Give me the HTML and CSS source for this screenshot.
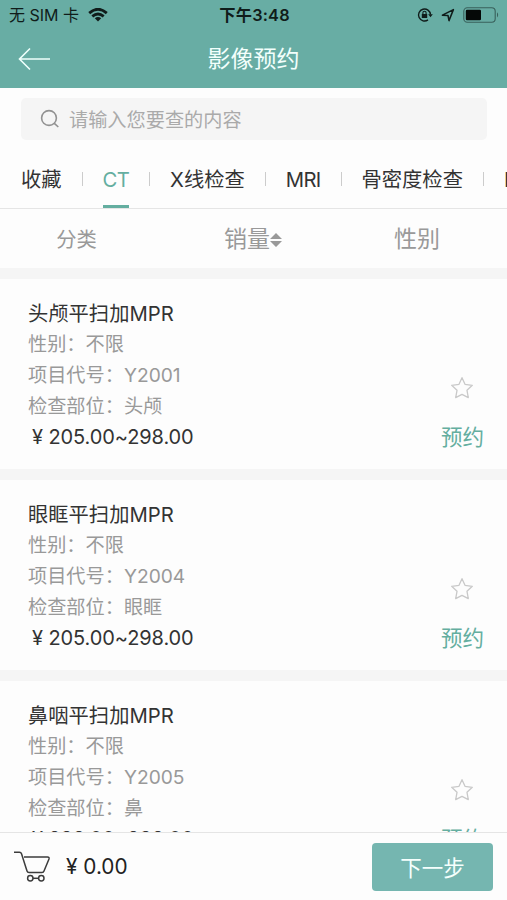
FILE: index.html
```html
<!DOCTYPE html>
<html lang="zh-CN">
<head>
<meta charset="utf-8">
<title>影像预约</title>
<link rel="stylesheet" href="styles.css">
</head>
<body>
<div class="app">
  <header class="header">
    <div class="status">
      <div class="carrier"><span>无 SIM 卡</span>
        <svg width="20" height="14" viewBox="0 0 20 14" fill="none" stroke="#101c1a" stroke-width="2.8"><path d="M1.2 5.1Q10-2.6 18.800 5.1M4.300 8.3Q10 3.600 15.700 8.3"/><path d="M6.800 10.300Q10 7.900 13.200 10.300L10 13.500Z" fill="#101c1a" stroke="none"/></svg>
      </div>
      <div class="clock">下午3:48</div>
      <div class="indicators">
        <svg width="16" height="16" viewBox="0 0 16 16" fill="none" stroke="#101c1a" stroke-width="1.4"><path d="M11 12.9A6 6 0 1 1 13.500 7.500"/><path d="M11.200 7.200h4.600l-2.300 3z" fill="#101c1a" stroke="none"/><rect x="4.800" y="7" width="5.400" height="4" fill="#101c1a" stroke="none"/><path d="M5.900 7V5.800a1.600 1.600 0 0 1 3.200 0V7" stroke-width="1.1"/></svg>
        <svg width="14" height="14" viewBox="0 0 14 14" fill="none" stroke="#101c1a" stroke-width="1.5" stroke-linejoin="round"><path d="M1.400 7.200 12.400 1.600 8 12.600 7 7.500Z"/></svg>
        <svg class="battery" width="37" height="16" viewBox="0 0 37 16"><rect x=".8" y=".8" width="31.400" height="14.400" rx="3.500" fill="none" stroke="#39605b" stroke-width="1.1"/><rect x="2.800" y="2.800" width="15.200" height="10.400" rx="1.200" fill="#050807"/><path d="M34 5.200q2.300 2.600 0 5.200z" fill="#39605b"/></svg>
      </div>
    </div>
    <div class="titlebar">
      <svg class="back" width="33" height="24" viewBox="0 0 33 24" fill="none" stroke="#eefffb" stroke-width="1.6"><path d="M12 1.500 1.500 12 12 22.500M1.500 12H32"/></svg>
      <h1>影像预约</h1>
    </div>
  </header>
  <div class="search">
    <svg width="20" height="20" viewBox="0 0 20 20" fill="none" stroke="#929292" stroke-width="1.6"><circle cx="9" cy="9" r="7.400"/><path d="m14.300 14.300 4 3.700"/></svg>
    <span>请输入您要查的内容</span>
  </div>
  <nav class="tabs">
    <span class="tab">收藏</span><i></i><span class="tab latin active">CT</span><i></i><span class="tab">X线检查</span><i></i><span class="tab latin">MRI</span><i></i><span class="tab">骨密度检查</span><i></i><span class="tab">DR</span>
  </nav>
  <div class="filters">
    <span class="category">分类</span>
    <span class="sales">销量<svg width="12" height="14" viewBox="0 0 12 14" fill="#999"><path d="M0 6 6 0l6 6zM0 8h12l-6 6z"/></svg></span>
    <span class="sex">性别</span>
  </div>
  <main class="list">
    <article class="card">
      <div class="info"><h2>头颅平扫加MPR</h2><p>性别：不限</p><p>项目代号：Y2001</p><p>检查部位：头颅</p><div class="price">¥ 205.00~298.00</div></div>
      <div class="actions"><svg class="star" viewBox="0 0 24 24"><path d="m12 1.700 3 6.600 7.300 1-5.300 5 1.300 7.300L12 18.300l-6.300 3.300L7 14.300l-5.300-5 7.300-1Z"/></svg><a>预约</a></div>
    </article>
    <article class="card">
      <div class="info"><h2>眼眶平扫加MPR</h2><p>性别：不限</p><p>项目代号：Y2004</p><p>检查部位：眼眶</p><div class="price">¥ 205.00~298.00</div></div>
      <div class="actions"><svg class="star" viewBox="0 0 24 24"><path d="m12 1.700 3 6.600 7.300 1-5.300 5 1.300 7.300L12 18.300l-6.300 3.300L7 14.300l-5.300-5 7.300-1Z"/></svg><a>预约</a></div>
    </article>
    <article class="card">
      <div class="info"><h2>鼻咽平扫加MPR</h2><p>性别：不限</p><p>项目代号：Y2005</p><p>检查部位：鼻</p><div class="price">¥ 298.00~298.00</div></div>
      <div class="actions"><svg class="star" viewBox="0 0 24 24"><path d="m12 1.700 3 6.600 7.300 1-5.300 5 1.300 7.300L12 18.300l-6.300 3.300L7 14.300l-5.300-5 7.300-1Z"/></svg><a>预约</a></div>
    </article>
  </main>
  <footer class="footer">
    <svg class="cart" width="37" height="32" viewBox="0 0 37 32" fill="none" stroke="#3c3c3c" stroke-width="1.5" stroke-linejoin="round"><path d="M0 1.200H5.500Q7 1.200 7.500 2.700L13 20Q13.500 21.500 15 21.500H28Q29.500 21.500 30 20L35 8Q35.500 6 33.500 6H10"/><circle cx="16.300" cy="27.300" r="2.700"/><circle cx="27.300" cy="27.300" r="2.700"/><path d="M19 27.300h5.600"/></svg>
    <span class="total">¥ 0.00</span>
    <button class="next">下一步</button>
  </footer>
</div>
</body>
</html>
```
FILE: styles.css
```css
* { box-sizing: border-box; }
body { margin: 0; background: #fdfdfd; font-family: Inter, "Noto Sans CJK SC", sans-serif; color: #333; }
h1, h2, p { margin: 0; font-weight: 400; }
svg { display: block; flex: none; }
.app { width: 507px; height: 900px; display: flex; flex-direction: column; overflow: hidden; white-space: nowrap; }
.header { height: 88px; flex: none; background: #68ada4; }
.status { height: 30px; display: grid; grid-template-columns: 1fr auto 1fr; align-items: center; padding: 0 7px 0 9px; color: #101c1a; font-size: 16px; line-height: 30px; }
.carrier, .indicators { display: flex; align-items: center; }
.carrier { gap: 9px; }
.clock { font-weight: 600; font-size: 16.3px; letter-spacing: .2px; }
.indicators { justify-content: flex-end; gap: 8px; }
.titlebar { height: 58px; display: grid; grid-template-columns: 1fr auto 1fr; align-items: center; padding: 0 18px; }
.titlebar h1 { font-size: 23px; line-height: 58px; color: #f2fffc; }
.search { height: 42px; flex: none; margin: 10px 20px 0 21px; padding-left: 19px; background: #f5f5f5; border-radius: 5px; display: flex; align-items: center; gap: 9px; font-size: 19.2px; color: #aaa; }
.tabs { height: 69px; flex: none; padding-left: 21px; display: flex; align-items: center; border-bottom: 1px solid #e5e5e5; font-size: 20.3px; overflow: hidden; }
.tabs i { width: 1px; height: 14px; flex: none; margin: 10px 20px 0; background: #ccc; }
.tab { height: 68px; line-height: 79px; flex: none; }
.latin { letter-spacing: -.7px; }
.active { color: #64aea0; border-bottom: 3px solid #64aea0; }
.filters { height: 59px; flex: none; display: grid; grid-template-columns: 153px 200px 1fr; align-items: center; justify-items: center; color: #999; font-size: 23px; line-height: 57px; padding-top: 2px; }
.category { font-size: 20.3px; }
.sales { display: flex; align-items: center; }
.sex { padding-right: 26px; }
.list { flex: 1; min-height: 0; overflow: hidden; background: #f5f5f5; padding-top: 11px; }
.card { height: 190px; margin-bottom: 11px; padding: 19px 23px 0 28px; background: #fdfdfd; display: flex; justify-content: space-between; line-height: 31px; }
.card h2 { font-size: 20.3px; }
.card p { font-size: 19.2px; color: #999; }
.price { font-size: 20px; letter-spacing: -.1px; padding-left: 4px; }
.actions { display: flex; flex-direction: column; align-items: center; padding-top: 78px; }
.actions a { font-size: 21.5px; color: #64aea0; margin-top: 22px; }
.star { width: 24px; height: 24px; fill: none; stroke: #c9c9c9; stroke-width: 1.3; stroke-linejoin: round; }
.footer { height: 68px; flex: none; border-top: 1px solid #e5e5e5; display: flex; align-items: center; padding: 0 14px; }
.total { margin-left: 15px; font-size: 20.8px; color: #222; }
.next { margin-left: auto; width: 121px; height: 48px; border: 0; border-radius: 4px; padding: 0; background: #75b6b0; color: #f5fffd; font: 21.5px Inter, "Noto Sans CJK SC", sans-serif; }
```
